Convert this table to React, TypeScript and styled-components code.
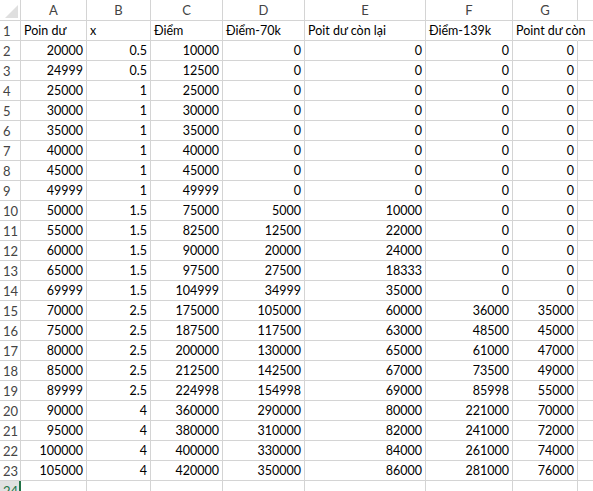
import React from "react";
import styled, { createGlobalStyle, css } from "styled-components";

const Global = createGlobalStyle`
  html, body { margin: 0; padding: 0; background: #ffffff; overflow: hidden; }
  body { font-family: Lato, "Open Sans", sans-serif; }
`;

const GRID = "#d4d4d4";

const Viewport = styled.div`
  width: 593px;
  height: 491px;
  overflow: hidden;
`;

const Sheet = styled.div`
  display: grid;
  grid-template-columns: 21px 66px 64px 72px 82px 121px 87px 65px 64px;
  grid-template-rows: 21px;
  grid-auto-rows: 20px;
  width: max-content;
  font-family: Lato, "Open Sans", sans-serif;
  font-size: 12.5px;
  color: #000;
`;

const baseCell = css`
  box-sizing: border-box;
  border-right: 1px solid ${GRID};
  border-bottom: 1px solid ${GRID};
  white-space: nowrap;
  display: flex;
  align-items: flex-end;
  padding-bottom: 2px;
  line-height: 14px;
`;

const Corner = styled.div`
  ${baseCell};
  position: relative;
  &::after {
    content: "";
    position: absolute;
    right: 2px;
    bottom: 2px;
    width: 0;
    height: 0;
    border-left: 13px solid transparent;
    border-bottom: 13px solid #dfdfdf;
  }
`;

const ColHeader = styled.div`
  ${baseCell};
  justify-content: center;
  color: #444444;
  font-size: 13px;
  padding-bottom: 3px;
`;

const RowHeader = styled.div<{ $active?: boolean }>`
  ${baseCell};
  justify-content: flex-start;
  padding-left: 3px;
  color: #444444;
  font-size: 13px;
  ${(p) =>
    p.$active &&
    css`
      background: #e1e1e1;
      color: #217346;
      border-right: 2px solid #217346;
    `}
`;

const Cell = styled.div<{ $num?: boolean; $spill?: boolean }>`
  ${baseCell};
  justify-content: ${(p) => (p.$num ? "flex-end" : "flex-start")};
  padding-left: 3px;
  padding-right: 3px;
  overflow: ${(p) => (p.$spill ? "visible" : "hidden")};
  ${(p) =>
    p.$spill &&
    css`
      border-right-color: transparent;
      position: relative;
      z-index: 1;
    `}
`;

const cols = ["A", "B", "C", "D", "E", "F", "G", "H"];

const headers = [
  "Poin dư",
  "x",
  "Điểm",
  "Điểm-70k",
  "Poit dư còn lại",
  "Điểm-139k",
  "Point dư còn",
];

const data: (string | number)[][] = [
  [20000, 0.5, 10000, 0, 0, 0, 0],
  [24999, 0.5, 12500, 0, 0, 0, 0],
  [25000, 1, 25000, 0, 0, 0, 0],
  [30000, 1, 30000, 0, 0, 0, 0],
  [35000, 1, 35000, 0, 0, 0, 0],
  [40000, 1, 40000, 0, 0, 0, 0],
  [45000, 1, 45000, 0, 0, 0, 0],
  [49999, 1, 49999, 0, 0, 0, 0],
  [50000, 1.5, 75000, 5000, 10000, 0, 0],
  [55000, 1.5, 82500, 12500, 22000, 0, 0],
  [60000, 1.5, 90000, 20000, 24000, 0, 0],
  [65000, 1.5, 97500, 27500, 18333, 0, 0],
  [69999, 1.5, 104999, 34999, 35000, 0, 0],
  [70000, 2.5, 175000, 105000, 60000, 36000, 35000],
  [75000, 2.5, 187500, 117500, 63000, 48500, 45000],
  [80000, 2.5, 200000, 130000, 65000, 61000, 47000],
  [85000, 2.5, 212500, 142500, 67000, 73500, 49000],
  [89999, 2.5, 224998, 154998, 69000, 85998, 55000],
  [90000, 4, 360000, 290000, 80000, 221000, 70000],
  [95000, 4, 380000, 310000, 82000, 241000, 72000],
  [100000, 4, 400000, 330000, 84000, 261000, 74000],
  [105000, 4, 420000, 350000, 86000, 281000, 76000],
];

export default function App() {
  return (
    <>
      <Global />
      <Viewport>
        <Sheet>
          <Corner />
          {cols.map((c) => (
            <ColHeader key={c}>{c}</ColHeader>
          ))}

          <RowHeader>1</RowHeader>
          {headers.map((h, i) => (
            <Cell key={i} $spill={i === 6}>
              {h}
            </Cell>
          ))}
          <Cell />

          {data.map((row, r) => (
            <React.Fragment key={r}>
              <RowHeader>{r + 2}</RowHeader>
              {row.map((v, i) => (
                <Cell key={i} $num>
                  {v}
                </Cell>
              ))}
              <Cell />
            </React.Fragment>
          ))}

          <RowHeader $active>24</RowHeader>
          {cols.map((c) => (
            <Cell key={c} />
          ))}
        </Sheet>
      </Viewport>
    </>
  );
}
